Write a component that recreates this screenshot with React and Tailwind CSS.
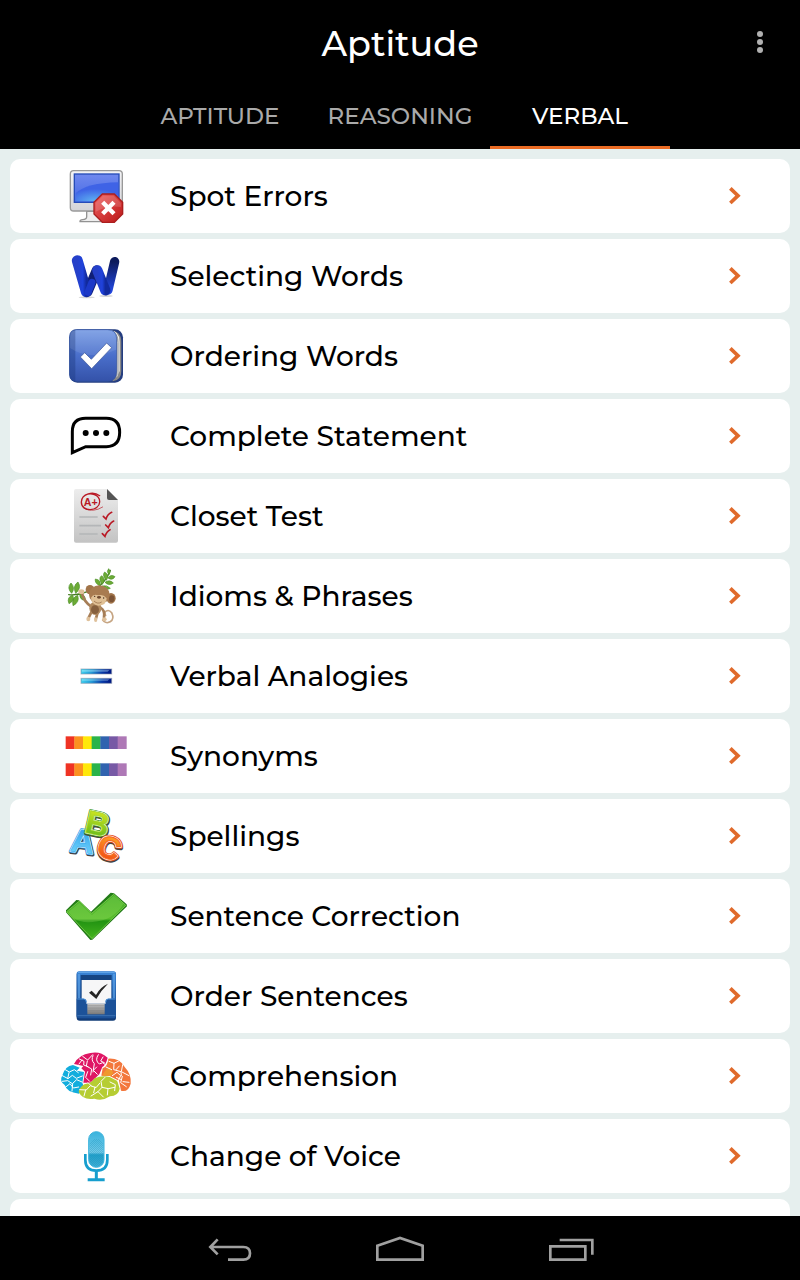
import React from 'react';

const tabs = ['APTITUDE', 'REASONING', 'VERBAL'];

const Icon = ({ children }) => (
  <svg viewBox="0 0 240 222" className="h-[74px] w-20 shrink-0" aria-hidden="true">
    {children}
  </svg>
);

const ComputerIcon = () => (
  <Icon>
    <defs>
      <linearGradient id="pcBody" x1="0" y1="0" x2="0" y2="1">
        <stop offset="0" stopColor="#f4f4f6" />
        <stop offset="1" stopColor="#d4d4d8" />
      </linearGradient>
      <linearGradient id="pcScreen" x1="0" y1="0" x2="0" y2="1">
        <stop offset="0" stopColor="#7089ee" />
        <stop offset="1" stopColor="#4568e4" />
      </linearGradient>
      <radialGradient id="pcGlow" cx="0.45" cy="1" r="0.65">
        <stop offset="0" stopColor="#5fb4f2" />
        <stop offset="1" stopColor="#3f63e6" />
      </radialGradient>
      <linearGradient id="pcStop" x1="0" y1="0" x2="1" y2="1">
        <stop offset="0" stopColor="#ef6060" />
        <stop offset="1" stopColor="#bb1717" />
      </linearGradient>
    </defs>
    <path d="M92 157v16q0 8-12 9q-9 1-8 6h76v-32z" fill="#eee" stroke="#929292" strokeWidth="4" />
    <rect x="43" y="35" width="156" height="121" rx="10" fill="url(#pcBody)" stroke="#999" strokeWidth="4" />
    <rect x="55" y="45" width="134" height="85" fill="url(#pcScreen)" stroke="#264cb8" strokeWidth="4" />
    <path d="M59 103Q90 72 187 70v57H59z" fill="url(#pcGlow)" />
    <path d="M139 105h36l25 25v35l-25 25h-36l-25-25v-35z" fill="url(#pcStop)" stroke="#ab1e1e" strokeWidth="4" />
    <path d="M141 110h32l22 22v12q-38-7-76 14v-26z" fill="#fff" opacity="0.15" />
    <path d="M140 130l34 34M174 130l-34 34" stroke="#fff" strokeWidth="13" />
  </Icon>
);

const RibbonIcon = () => (
  <Icon>
    <defs>
      <linearGradient id="ribbonA" x1="0" y1="0" x2="1" y2="0">
        <stop offset="0" stopColor="#2540c9" />
        <stop offset="0.6" stopColor="#1f42dc" />
        <stop offset="1" stopColor="#112a9e" />
      </linearGradient>
      <linearGradient id="ribbonB" x1="0" y1="0" x2="0" y2="1">
        <stop offset="0" stopColor="#0c1a5c" />
        <stop offset="1" stopColor="#2246dc" />
      </linearGradient>
    </defs>
    <ellipse cx="92" cy="175" rx="24" ry="3" fill="#999" opacity="0.4" />
    <ellipse cx="150" cy="171" rx="20" ry="3" fill="#999" opacity="0.4" />
    <g fill="none" strokeLinecap="round" strokeLinejoin="round">
      <path d="M95 158L122 94" stroke="#101f76" strokeWidth="30" />
      <path d="M176 68L156 153" stroke="url(#ribbonB)" strokeWidth="28" />
      <path d="M124 94L148 154" stroke="url(#ribbonA)" strokeWidth="31" />
      <path d="M64 65L91 158" stroke="url(#ribbonA)" strokeWidth="33" />
      <path d="M96 160l12-30" stroke="#1c39c8" strokeWidth="21" />
    </g>
  </Icon>
);

const BookIcon = () => (
  <Icon>
    <defs>
      <linearGradient id="bookCover" x1="0" y1="0" x2="0" y2="1">
        <stop offset="0" stopColor="#789ce4" />
        <stop offset="0.5" stopColor="#4a6fcb" />
        <stop offset="1" stopColor="#3452a9" />
      </linearGradient>
    </defs>
    <rect x="40" y="31" width="161" height="160" rx="24" fill="#253e80" />
    <path d="M158 34q38 0 38 35v87q0 28-26 31z" fill="#888" />
    <path d="M162 34q29 2 29 34v88l-9 20V65q0-22-20-31z" fill="#f1f1ec" />
    <path d="M172 39q14 8 14 31v99" fill="none" stroke="#888d95" strokeWidth="3" />
    <path d="M62 32h92q28 0 28 28v96q0 31-28 31H62q-21 0-21-21V53q0-21 21-21z" fill="url(#bookCover)" stroke="#3153a3" strokeWidth="2" />
    <path d="M58 32v155q-16 0-17-23V53q0-20 17-21z" fill="#203b82" opacity="0.45" />
    <path d="M42 87q60 40 138 5V60q0-27-27-27H62q-20 0-20 21z" fill="#fff" opacity="0.09" />
    <path d="M73 114l13-13 20 20 46-49 15 14-60 63z" fill="#fff" stroke="#334e94" strokeWidth="2" />
  </Icon>
);

const BubbleIcon = () => (
  <Icon>
    <path d="M49 161V98q0-40 40-40h62q40 0 40 42 0 43-40 43H89z" fill="none" stroke="#000" strokeWidth="9" />
    <circle cx="89" cy="102" r="9" />
    <circle cx="120" cy="102" r="9" />
    <circle cx="151" cy="102" r="9" />
  </Icon>
);

const PaperIcon = () => (
  <Icon>
    <defs>
      <linearGradient id="paper" x1="0" y1="0" x2="0" y2="1">
        <stop offset="0" stopColor="#ededed" />
        <stop offset="1" stopColor="#c3c3c3" />
      </linearGradient>
    </defs>
    <path d="M60 30h94l32 33v122q0 6-6 6H60q-6 0-6-6V36q0-6 6-6z" fill="url(#paper)" />
    <path d="M153 30l33 33h-27q-6 0-6-6z" fill="#555" />
    <path d="M70 114h55M70 140h65M70 165h55" stroke="#b4b6b8" strokeWidth="5" />
    <g fill="none" stroke="#b91925" strokeWidth="4" strokeLinecap="round">
      <path d="M131 50C112 36 77 43 76 69c0 32 54 29 55 0 1-24-29-29-44-20" />
      <path d="M84 88q28 14 56-4" strokeWidth="2" />
      <path d="M142 112l8 8q5-15 17-20M149 138l8 8q5-15 16-20M139 164l8 8q5-15 15-20" strokeWidth="5" />
    </g>
    <text x="104" y="81" textAnchor="middle" fontFamily="Liberation Sans, sans-serif" fontSize="32" fontWeight="700" fill="#b91925">A+</text>
  </Icon>
);

const MonkeyIcon = () => (
  <Icon>
    <g fill="none" strokeLinecap="round">
      <path d="M38 107q28 3 56-9M120 90q30-22 43-56" stroke="#477c22" strokeWidth="4" />
      <path d="M140 183c11 16 40 6 27-22-11-14-27-1-18 8" stroke="#c6a583" strokeWidth="5" />
    </g>
    <g fill="#6cab35" stroke="#4b8f27" strokeWidth="2">
      <path d="M47 103q-16-17-2-31 14 14 2 31zM59 103q-10-23 7-34 12 18-7 34zM50 108q-19 7-11 26 19-9 11-26zM65 109q-19 7-14 31 21-10 14-31zM71 104q0 20 17 20 1-17-17-20z" />
      <path d="M132 81q-17-9-14-21 19 3 14 21zM139 76q-14-18-2-26 14 11 2 26zM151 64q-14-15-5-25 16 9 5 25zM159 47q-9-10-1-18 9 9 1 18zM138 81q15-4 25 7-17 9-25-7zM147 70q14-10 25 2-14 10-25-2zM156 57q8-13 21-4-8 13-21 4z" />
    </g>
    <g fill="none" strokeLinecap="round" stroke="#a67e57" strokeWidth="8">
      <path d="M106 143Q85 130 78 104" />
      <path d="M107 158l-9 18M125 160l-5 18M132 145q16 8 12 30" />
    </g>
    <ellipse cx="76" cy="98" rx="9" ry="7" fill="#dfc19b" />
    <ellipse cx="118" cy="148" rx="18" ry="20" fill="#b08a60" />
    <ellipse cx="117" cy="152" rx="12" ry="13" fill="#86603e" />
    <ellipse cx="102" cy="92" rx="13" ry="14" fill="#a17449" />
    <ellipse cx="165" cy="118" rx="14" ry="16" fill="#a17449" />
    <ellipse cx="167" cy="119" rx="8" ry="10" fill="#7c5436" />
    <ellipse cx="130" cy="107" rx="31" ry="28" fill="#a87b50" />
    <path d="M105 116q7-13 22-7 14-5 25 9-1 22-24 22-23-4-23-24z" fill="#e0c095" />
    <ellipse cx="129" cy="115" rx="6" ry="4" fill="#704a2f" />
    <circle cx="116" cy="112" r="2" fill="#382519" />
    <circle cx="143" cy="117" r="2" fill="#382519" />
    <path d="M114 126q11 11 23 3" fill="none" stroke="#8c603c" strokeWidth="2" />
    <ellipse cx="97" cy="180" rx="6" ry="7" fill="#dfc19b" />
    <ellipse cx="119" cy="182" rx="5" ry="7" fill="#dfc19b" />
    <ellipse cx="145" cy="181" rx="7" ry="6" fill="#dfc19b" />
  </Icon>
);

const EqualsIcon = () => (
  <Icon>
    <defs>
      <linearGradient id="bars" x1="0" y1="0" x2="1" y2="0.1">
        <stop offset="0" stopColor="#45dcf5" />
        <stop offset="0.4" stopColor="#249cd7" />
        <stop offset="0.75" stopColor="#073aaa" />
        <stop offset="1" stopColor="#001a86" />
      </linearGradient>
    </defs>
    <g fill="url(#bars)" stroke="#8995a9" strokeOpacity="0.6" strokeWidth="3">
      <rect x="75" y="90" width="92" height="15" />
      <rect x="75" y="118" width="92" height="15" />
    </g>
    <path d="M78 93h82l-5 5H78zM78 121h82l-5 4H78z" fill="#d9faff" opacity="0.35" />
  </Icon>
);

const rainbow = ['#ef3324', '#fb9120', '#ffe80a', '#2bb34a', '#3163af', '#7759a5', '#ae78b6'];

const RainbowIcon = () => (
  <Icon>
    {rainbow.map((color, i) => (
      <g key={color} fill={color}>
        <rect x={29 + i * 26} y="52" width="27" height="38" />
        <rect x={29 + i * 26} y="133" width="27" height="38" />
      </g>
    ))}
  </Icon>
);

const LettersIcon = () => (
  <Icon>
    <defs>
      <linearGradient id="letterA" x1="0" y1="0" x2="0" y2="1">
        <stop offset="0" stopColor="#2496ea" />
        <stop offset="1" stopColor="#7adcfc" />
      </linearGradient>
      <linearGradient id="letterB" x1="0" y1="0" x2="0" y2="1">
        <stop offset="0" stopColor="#e8ee22" />
        <stop offset="1" stopColor="#52b41c" />
      </linearGradient>
      <linearGradient id="letterC" x1="0" y1="0" x2="0" y2="1">
        <stop offset="0" stopColor="#ffb527" />
        <stop offset="1" stopColor="#ee3c13" />
      </linearGradient>
    </defs>
    <g fontFamily="Liberation Sans, sans-serif" fontWeight="700" textAnchor="middle" strokeLinejoin="round">
      <g transform="rotate(7 78 125)" fontSize="98">
        <text x="82" y="163" fill="#444" stroke="#444" strokeWidth="11">A</text>
        <text x="80" y="160" fill="#fff" stroke="#2a9de9" strokeWidth="9">A</text>
        <text x="80" y="160" fill="#fff" stroke="#effbff" strokeWidth="5">A</text>
        <text x="80" y="160" fill="url(#letterA)" stroke="#3fb0ef" strokeWidth="2">A</text>
      </g>
      <g transform="rotate(13 126 73)" fontSize="98">
        <text x="127" y="111" fill="#444" stroke="#444" strokeWidth="11">B</text>
        <text x="125" y="108" fill="#fff" stroke="#4c9b18" strokeWidth="9">B</text>
        <text x="125" y="108" fill="#fff" stroke="#f3ffe8" strokeWidth="5">B</text>
        <text x="125" y="108" fill="url(#letterB)" stroke="#a3d41e" strokeWidth="2">B</text>
      </g>
      <g transform="rotate(22 161 147)" fontSize="94">
        <text x="162" y="182" fill="#444" stroke="#444" strokeWidth="13">C</text>
        <text x="160" y="179" fill="#fff" stroke="#e34a14" strokeWidth="12">C</text>
        <text x="160" y="179" fill="#fff" stroke="#fff1e9" strokeWidth="7">C</text>
        <text x="160" y="179" fill="url(#letterC)" stroke="#f9671b" strokeWidth="3">C</text>
      </g>
    </g>
  </Icon>
);

const CheckIcon = () => (
  <Icon>
    <defs>
      <linearGradient id="tick" x1="0" y1="0" x2="0" y2="1">
        <stop offset="0" stopColor="#43ad27" />
        <stop offset="0.55" stopColor="#57bd2c" />
        <stop offset="0.6" stopColor="#229312" />
        <stop offset="1" stopColor="#45b41f" />
      </linearGradient>
    </defs>
    <path d="M30 94l31-31 8 1 36 34 59-57 10 2 38 33 1 6-104 100-6 1-73-83z" fill="#237c18" />
    <path d="M32 98l38-32 37 37 66-57 36 33-101 100z" fill="url(#tick)" stroke="#92db5b" strokeWidth="2" />
    <path d="M37 99l33-28 38 37 65-58 29 25q-28 49-92 54-39 3-57-12z" fill="#a6e671" opacity="0.25" />
  </Icon>
);

const TrayIcon = () => (
  <Icon>
    <defs>
      <linearGradient id="tray" x1="0" y1="0" x2="0" y2="1">
        <stop offset="0" stopColor="#3a84d6" />
        <stop offset="1" stopColor="#123f81" />
      </linearGradient>
      <linearGradient id="sheets" x1="0" y1="0" x2="0" y2="1">
        <stop offset="0" stopColor="#c5c5c5" />
        <stop offset="1" stopColor="#777" />
      </linearGradient>
    </defs>
    <rect x="62" y="38" width="118" height="147" rx="9" fill="#123c77" />
    <path d="M69 37h104q7 0 7 8v126q0 8-7 8H69q-7 0-7-8V45q0-8 7-8z" fill="url(#tray)" />
    <path d="M74 48h93v81H74z" fill="#164583" />
    <path d="M77 63h89v72H77z" fill="#f6f6f7" />
    <path d="M66 40h110M69 44v74M174 44v74" fill="none" stroke="#5fa4e8" strokeWidth="4" />
    <path d="M62 119h21q8 0 8 9v6h58v-6q0-9 8-9h23v51q0 8-8 8H70q-8 0-8-8z" fill="#1c5299" />
    <path d="M64 120h19q8 0 8 10M149 130q0-10 8-10h21" fill="none" stroke="#4791dc" strokeWidth="3" />
    <path d="M94 134h52v32H94z" fill="url(#sheets)" />
    <path d="M94 140h52M94 147h52M94 155h52" stroke="#777" strokeWidth="1" />
    <path d="M64 170h114" stroke="#4b83bf" strokeWidth="2" />
    <path d="M99 101l8-6 13 13q12-24 36-34-21 20-35 46z" fill="#252525" />
  </Icon>
);

const BrainIcon = () => (
  <Icon>
    <path d="M51 78l20 8-9 9 22 4-5 32 5 14-15 19q-37-4-43-26-17-11-7-29 8-28 32-31z" fill="#12addd" />
    <path d="M54 75Q69 46 103 42q29-7 52 14-5 21-16 28l-9 22-27 25-21 0 5-33-11-10 6-7z" fill="#df1664" />
    <path d="M157 59q34-2 49 25 21 22 18 50-7 27-29 21l-6-30-28-14-25-1 4-22q15-6 17-29z" fill="#f3773c" />
    <path d="M138 110q15-25 25-26l9 18-8 9z" fill="#ef982e" />
    <path d="M85 136q20-2 31-18 21-10 45-4l23 12 7 23q-4 22-29 23-24 16-47 7-34 6-47-20 3-15 17-23z" fill="#b6cd33" />
    <g fill="none" stroke="#fff" strokeWidth="3" strokeLinecap="round" strokeLinejoin="round">
      <path d="M26 91l14 8 15-7 12 9M19 110l17 9 13-10 12 9 18-7M19 127l16-2 14 9 13-12 16 7M28 145l14-11 10 13 16-3M39 101l-4 18M50 134l-2 22" />
      <path d="M70 60l14 7-1 11 13 5M80 52l15 11 15-16M94 66l-3 15 16 9-3 18M111 50q-7 13 4 24l-4 25M127 47q-12 17 3 28l10-4 8 6M122 84l-10 10 12 12M95 98l-6 17 12 12M78 63l-9 12M141 54l-7 12 11 5" />
      <path d="M159 67l15 6 18-9M174 73l-1 19 22 6 1 12M150 84l17 8M190 81l-10 11M200 77l-4 21 23 12M169 110l14-10 11 10-8 17M199 112l-5 19 17 12M219 130l-18-2M181 115l15 7" />
      <path d="M71 152l20 1 12-13 17 6 11-13M89 153l-5 18M106 141l-10-10M113 161l4-17M105 171l21-13 16 16M126 158l12-13 19 4 19-4M138 145l-3-18 12-12M156 148l-2 20M162 129l16 8-2 18" />
    </g>
  </Icon>
);

const MicIcon = () => (
  <Icon>
    <defs>
      <linearGradient id="mic" x1="0" y1="0" x2="0" y2="1">
        <stop offset="0" stopColor="#38b3dd" />
        <stop offset="0.58" stopColor="#74cae8" />
        <stop offset="0.65" stopColor="#219fc9" />
        <stop offset="1" stopColor="#41b0d7" />
      </linearGradient>
      <pattern id="mesh" width="6" height="6" patternUnits="userSpaceOnUse">
        <circle cx="2" cy="2" r="1" fill="#168db8" />
        <circle cx="5" cy="5" r="1" fill="#168db8" />
      </pattern>
    </defs>
    <rect x="98" y="38" width="46" height="107" rx="23" fill="url(#mic)" stroke="#3ab3dd" strokeWidth="3" />
    <rect x="101" y="59" width="40" height="84" rx="20" fill="url(#mesh)" />
    <path d="M88 105v18q0 32 33 32t33-32v-18" fill="none" stroke="#169ece" strokeWidth="8" />
    <path d="M121 157v24M95 182h51" stroke="#169ece" strokeWidth="9" />
  </Icon>
);

const topics = [
  { name: 'Spot Errors', icon: ComputerIcon },
  { name: 'Selecting Words', icon: RibbonIcon },
  { name: 'Ordering Words', icon: BookIcon },
  { name: 'Complete Statement', icon: BubbleIcon },
  { name: 'Closet Test', icon: PaperIcon },
  { name: 'Idioms & Phrases', icon: MonkeyIcon },
  { name: 'Verbal Analogies', icon: EqualsIcon },
  { name: 'Synonyms', icon: RainbowIcon },
  { name: 'Spellings', icon: LettersIcon },
  { name: 'Sentence Correction', icon: CheckIcon },
  { name: 'Order Sentences', icon: TrayIcon },
  { name: 'Comprehension', icon: BrainIcon },
  { name: 'Change of Voice', icon: MicIcon },
];

const TopicRow = ({ name, icon: TopicIcon }) => (
  <li>
    <button className="flex w-full items-center rounded-[10px] bg-white pr-12 pl-[46px] text-left">
      <TopicIcon />
      <span className="ml-[34px] flex-1 text-[28px] leading-9 font-medium text-black">{name}</span>
      <svg viewBox="0 0 42 54" className="h-[18px] w-3.5" fill="none" stroke="#e06a2b" strokeWidth="11" aria-hidden="true">
        <path d="M7 4l23 22L7 48" />
      </svg>
    </button>
  </li>
);

const App = () => {
  return (
    <div className="flex h-screen flex-col bg-[#e6efee] font-['Montserrat','Inter',sans-serif]">
      <header className="shrink-0 bg-black">
        <div className="grid h-[85px] grid-cols-[80px_1fr_80px] items-center">
          <h1 className="col-start-2 pt-0.5 text-center text-[35px] leading-10 font-medium text-white">Aptitude</h1>
          <button aria-label="More options" className="flex h-12 w-20 items-center justify-center">
            <svg viewBox="0 0 8 24" className="h-6 w-2" fill="#b0b0b0" aria-hidden="true">
              <circle cx="4" cy="3" r="3" />
              <circle cx="4" cy="11" r="3" />
              <circle cx="4" cy="19" r="3" />
            </svg>
          </button>
        </div>
        <nav className="flex h-16 justify-center">
          {tabs.map((tab) => (
            <button
              key={tab}
              className={`w-[180px] border-b-[3px] pt-0.5 text-[23px] font-medium ${tab === 'VERBAL' ? 'border-[#ec6c24] text-white' : 'border-transparent text-[#aaaaaa]'}`}
            >
              {tab}
            </button>
          ))}
        </nav>
      </header>

      <main className="min-h-0 flex-1 overflow-y-auto px-2.5 pt-2.5 [scrollbar-width:none]">
        <ul className="flex flex-col gap-1.5">
          {topics.map((topic) => (
            <TopicRow key={topic.name} {...topic} />
          ))}
          <li className="h-[74px] rounded-[10px] bg-white" />
        </ul>
      </main>

      <footer className="flex h-16 shrink-0 justify-center bg-black">
        <button aria-label="Back" className="flex w-[170px] justify-center">
          <svg viewBox="0 0 180 192" className="h-16 w-[60px]" fill="none" stroke="#a0a0a0" strokeWidth="8" aria-hidden="true">
            <path d="M53 70L31 93l22 22M31 93h99q20 0 20 19t-20 19H84" />
          </svg>
        </button>
        <button aria-label="Home" className="flex w-[170px] justify-center">
          <svg viewBox="0 0 180 192" className="h-16 w-[60px]" fill="none" stroke="#a0a0a0" strokeWidth="8" aria-hidden="true">
            <path d="M22 89L90 66l68 23v42H22z" />
          </svg>
        </button>
        <button aria-label="Recent apps" className="flex w-[170px] justify-center">
          <svg viewBox="0 0 180 192" className="h-16 w-[60px]" fill="none" stroke="#a0a0a0" strokeWidth="8" aria-hidden="true">
            <path d="M31 91h105v40H31zM59 72h98v44" />
          </svg>
        </button>
      </footer>
    </div>
  );
};

export default App;
